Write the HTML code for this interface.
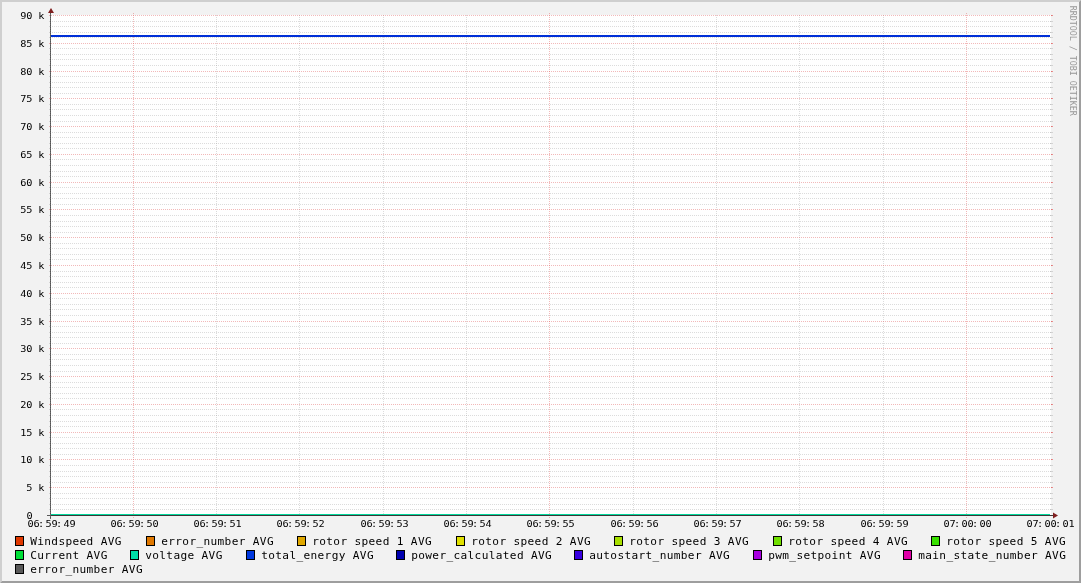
<!DOCTYPE html>
<html><head><meta charset="utf-8"><title>RRDtool graph</title>
<style>html,body{margin:0;padding:0;background:#f2f2f2;overflow:hidden}svg{display:block;will-change:transform}text{font-family:"DejaVu Sans Mono","Liberation Mono",monospace;fill:#000;white-space:pre;stroke:none}.ax{font-size:9.5px;letter-spacing:-0.164px}.ay{font-size:9.5px;letter-spacing:0.5px}.lg{font-size:11.11px;letter-spacing:0.36px}.wm{font-size:7.64px;letter-spacing:-0.05px;fill:#979797}</style></head><body>
<svg width="1081" height="583" viewBox="0 0 1081 583">
<rect x="0" y="0" width="1081" height="583" fill="#f2f2f2"/>
<polygon points="0,0 1081,0 1079,2 2,2 2,581 0,583" fill="#cfcfcf"/>
<polygon points="1081,0 1081,583 0,583 2,581 1079,581 1079,2" fill="#9e9e9e"/>
<rect x="51" y="15" width="1000" height="501" fill="#ffffff"/>
<g shape-rendering="crispEdges">
<line x1="50" y1="509.5" x2="1051" y2="509.5" stroke="rgba(143,143,143,0.31)" stroke-width="1" stroke-dasharray="1 1"/>
<line x1="1050" y1="509.5" x2="1053" y2="509.5" stroke="rgba(143,143,143,0.31)" stroke-width="1"/>
<line x1="49" y1="509.5" x2="50" y2="509.5" stroke="rgba(143,143,143,0.31)" stroke-width="1"/>
<line x1="50" y1="504.5" x2="1051" y2="504.5" stroke="rgba(143,143,143,0.31)" stroke-width="1" stroke-dasharray="1 1"/>
<line x1="1050" y1="504.5" x2="1053" y2="504.5" stroke="rgba(143,143,143,0.31)" stroke-width="1"/>
<line x1="49" y1="504.5" x2="50" y2="504.5" stroke="rgba(143,143,143,0.31)" stroke-width="1"/>
<line x1="50" y1="498.5" x2="1051" y2="498.5" stroke="rgba(143,143,143,0.31)" stroke-width="1" stroke-dasharray="1 1"/>
<line x1="1050" y1="498.5" x2="1053" y2="498.5" stroke="rgba(143,143,143,0.31)" stroke-width="1"/>
<line x1="49" y1="498.5" x2="50" y2="498.5" stroke="rgba(143,143,143,0.31)" stroke-width="1"/>
<line x1="50" y1="493.5" x2="1051" y2="493.5" stroke="rgba(143,143,143,0.31)" stroke-width="1" stroke-dasharray="1 1"/>
<line x1="1050" y1="493.5" x2="1053" y2="493.5" stroke="rgba(143,143,143,0.31)" stroke-width="1"/>
<line x1="49" y1="493.5" x2="50" y2="493.5" stroke="rgba(143,143,143,0.31)" stroke-width="1"/>
<line x1="50" y1="482.5" x2="1051" y2="482.5" stroke="rgba(143,143,143,0.31)" stroke-width="1" stroke-dasharray="1 1"/>
<line x1="1050" y1="482.5" x2="1053" y2="482.5" stroke="rgba(143,143,143,0.31)" stroke-width="1"/>
<line x1="49" y1="482.5" x2="50" y2="482.5" stroke="rgba(143,143,143,0.31)" stroke-width="1"/>
<line x1="50" y1="476.5" x2="1051" y2="476.5" stroke="rgba(143,143,143,0.31)" stroke-width="1" stroke-dasharray="1 1"/>
<line x1="1050" y1="476.5" x2="1053" y2="476.5" stroke="rgba(143,143,143,0.31)" stroke-width="1"/>
<line x1="49" y1="476.5" x2="50" y2="476.5" stroke="rgba(143,143,143,0.31)" stroke-width="1"/>
<line x1="50" y1="471.5" x2="1051" y2="471.5" stroke="rgba(143,143,143,0.31)" stroke-width="1" stroke-dasharray="1 1"/>
<line x1="1050" y1="471.5" x2="1053" y2="471.5" stroke="rgba(143,143,143,0.31)" stroke-width="1"/>
<line x1="49" y1="471.5" x2="50" y2="471.5" stroke="rgba(143,143,143,0.31)" stroke-width="1"/>
<line x1="50" y1="465.5" x2="1051" y2="465.5" stroke="rgba(143,143,143,0.31)" stroke-width="1" stroke-dasharray="1 1"/>
<line x1="1050" y1="465.5" x2="1053" y2="465.5" stroke="rgba(143,143,143,0.31)" stroke-width="1"/>
<line x1="49" y1="465.5" x2="50" y2="465.5" stroke="rgba(143,143,143,0.31)" stroke-width="1"/>
<line x1="50" y1="454.5" x2="1051" y2="454.5" stroke="rgba(143,143,143,0.31)" stroke-width="1" stroke-dasharray="1 1"/>
<line x1="1050" y1="454.5" x2="1053" y2="454.5" stroke="rgba(143,143,143,0.31)" stroke-width="1"/>
<line x1="49" y1="454.5" x2="50" y2="454.5" stroke="rgba(143,143,143,0.31)" stroke-width="1"/>
<line x1="50" y1="448.5" x2="1051" y2="448.5" stroke="rgba(143,143,143,0.31)" stroke-width="1" stroke-dasharray="1 1"/>
<line x1="1050" y1="448.5" x2="1053" y2="448.5" stroke="rgba(143,143,143,0.31)" stroke-width="1"/>
<line x1="49" y1="448.5" x2="50" y2="448.5" stroke="rgba(143,143,143,0.31)" stroke-width="1"/>
<line x1="50" y1="443.5" x2="1051" y2="443.5" stroke="rgba(143,143,143,0.31)" stroke-width="1" stroke-dasharray="1 1"/>
<line x1="1050" y1="443.5" x2="1053" y2="443.5" stroke="rgba(143,143,143,0.31)" stroke-width="1"/>
<line x1="49" y1="443.5" x2="50" y2="443.5" stroke="rgba(143,143,143,0.31)" stroke-width="1"/>
<line x1="50" y1="437.5" x2="1051" y2="437.5" stroke="rgba(143,143,143,0.31)" stroke-width="1" stroke-dasharray="1 1"/>
<line x1="1050" y1="437.5" x2="1053" y2="437.5" stroke="rgba(143,143,143,0.31)" stroke-width="1"/>
<line x1="49" y1="437.5" x2="50" y2="437.5" stroke="rgba(143,143,143,0.31)" stroke-width="1"/>
<line x1="50" y1="426.5" x2="1051" y2="426.5" stroke="rgba(143,143,143,0.31)" stroke-width="1" stroke-dasharray="1 1"/>
<line x1="1050" y1="426.5" x2="1053" y2="426.5" stroke="rgba(143,143,143,0.31)" stroke-width="1"/>
<line x1="49" y1="426.5" x2="50" y2="426.5" stroke="rgba(143,143,143,0.31)" stroke-width="1"/>
<line x1="50" y1="421.5" x2="1051" y2="421.5" stroke="rgba(143,143,143,0.31)" stroke-width="1" stroke-dasharray="1 1"/>
<line x1="1050" y1="421.5" x2="1053" y2="421.5" stroke="rgba(143,143,143,0.31)" stroke-width="1"/>
<line x1="49" y1="421.5" x2="50" y2="421.5" stroke="rgba(143,143,143,0.31)" stroke-width="1"/>
<line x1="50" y1="415.5" x2="1051" y2="415.5" stroke="rgba(143,143,143,0.31)" stroke-width="1" stroke-dasharray="1 1"/>
<line x1="1050" y1="415.5" x2="1053" y2="415.5" stroke="rgba(143,143,143,0.31)" stroke-width="1"/>
<line x1="49" y1="415.5" x2="50" y2="415.5" stroke="rgba(143,143,143,0.31)" stroke-width="1"/>
<line x1="50" y1="409.5" x2="1051" y2="409.5" stroke="rgba(143,143,143,0.31)" stroke-width="1" stroke-dasharray="1 1"/>
<line x1="1050" y1="409.5" x2="1053" y2="409.5" stroke="rgba(143,143,143,0.31)" stroke-width="1"/>
<line x1="49" y1="409.5" x2="50" y2="409.5" stroke="rgba(143,143,143,0.31)" stroke-width="1"/>
<line x1="50" y1="398.5" x2="1051" y2="398.5" stroke="rgba(143,143,143,0.31)" stroke-width="1" stroke-dasharray="1 1"/>
<line x1="1050" y1="398.5" x2="1053" y2="398.5" stroke="rgba(143,143,143,0.31)" stroke-width="1"/>
<line x1="49" y1="398.5" x2="50" y2="398.5" stroke="rgba(143,143,143,0.31)" stroke-width="1"/>
<line x1="50" y1="393.5" x2="1051" y2="393.5" stroke="rgba(143,143,143,0.31)" stroke-width="1" stroke-dasharray="1 1"/>
<line x1="1050" y1="393.5" x2="1053" y2="393.5" stroke="rgba(143,143,143,0.31)" stroke-width="1"/>
<line x1="49" y1="393.5" x2="50" y2="393.5" stroke="rgba(143,143,143,0.31)" stroke-width="1"/>
<line x1="50" y1="387.5" x2="1051" y2="387.5" stroke="rgba(143,143,143,0.31)" stroke-width="1" stroke-dasharray="1 1"/>
<line x1="1050" y1="387.5" x2="1053" y2="387.5" stroke="rgba(143,143,143,0.31)" stroke-width="1"/>
<line x1="49" y1="387.5" x2="50" y2="387.5" stroke="rgba(143,143,143,0.31)" stroke-width="1"/>
<line x1="50" y1="382.5" x2="1051" y2="382.5" stroke="rgba(143,143,143,0.31)" stroke-width="1" stroke-dasharray="1 1"/>
<line x1="1050" y1="382.5" x2="1053" y2="382.5" stroke="rgba(143,143,143,0.31)" stroke-width="1"/>
<line x1="49" y1="382.5" x2="50" y2="382.5" stroke="rgba(143,143,143,0.31)" stroke-width="1"/>
<line x1="50" y1="371.5" x2="1051" y2="371.5" stroke="rgba(143,143,143,0.31)" stroke-width="1" stroke-dasharray="1 1"/>
<line x1="1050" y1="371.5" x2="1053" y2="371.5" stroke="rgba(143,143,143,0.31)" stroke-width="1"/>
<line x1="49" y1="371.5" x2="50" y2="371.5" stroke="rgba(143,143,143,0.31)" stroke-width="1"/>
<line x1="50" y1="365.5" x2="1051" y2="365.5" stroke="rgba(143,143,143,0.31)" stroke-width="1" stroke-dasharray="1 1"/>
<line x1="1050" y1="365.5" x2="1053" y2="365.5" stroke="rgba(143,143,143,0.31)" stroke-width="1"/>
<line x1="49" y1="365.5" x2="50" y2="365.5" stroke="rgba(143,143,143,0.31)" stroke-width="1"/>
<line x1="50" y1="359.5" x2="1051" y2="359.5" stroke="rgba(143,143,143,0.31)" stroke-width="1" stroke-dasharray="1 1"/>
<line x1="1050" y1="359.5" x2="1053" y2="359.5" stroke="rgba(143,143,143,0.31)" stroke-width="1"/>
<line x1="49" y1="359.5" x2="50" y2="359.5" stroke="rgba(143,143,143,0.31)" stroke-width="1"/>
<line x1="50" y1="354.5" x2="1051" y2="354.5" stroke="rgba(143,143,143,0.31)" stroke-width="1" stroke-dasharray="1 1"/>
<line x1="1050" y1="354.5" x2="1053" y2="354.5" stroke="rgba(143,143,143,0.31)" stroke-width="1"/>
<line x1="49" y1="354.5" x2="50" y2="354.5" stroke="rgba(143,143,143,0.31)" stroke-width="1"/>
<line x1="50" y1="343.5" x2="1051" y2="343.5" stroke="rgba(143,143,143,0.31)" stroke-width="1" stroke-dasharray="1 1"/>
<line x1="1050" y1="343.5" x2="1053" y2="343.5" stroke="rgba(143,143,143,0.31)" stroke-width="1"/>
<line x1="49" y1="343.5" x2="50" y2="343.5" stroke="rgba(143,143,143,0.31)" stroke-width="1"/>
<line x1="50" y1="337.5" x2="1051" y2="337.5" stroke="rgba(143,143,143,0.31)" stroke-width="1" stroke-dasharray="1 1"/>
<line x1="1050" y1="337.5" x2="1053" y2="337.5" stroke="rgba(143,143,143,0.31)" stroke-width="1"/>
<line x1="49" y1="337.5" x2="50" y2="337.5" stroke="rgba(143,143,143,0.31)" stroke-width="1"/>
<line x1="50" y1="332.5" x2="1051" y2="332.5" stroke="rgba(143,143,143,0.31)" stroke-width="1" stroke-dasharray="1 1"/>
<line x1="1050" y1="332.5" x2="1053" y2="332.5" stroke="rgba(143,143,143,0.31)" stroke-width="1"/>
<line x1="49" y1="332.5" x2="50" y2="332.5" stroke="rgba(143,143,143,0.31)" stroke-width="1"/>
<line x1="50" y1="326.5" x2="1051" y2="326.5" stroke="rgba(143,143,143,0.31)" stroke-width="1" stroke-dasharray="1 1"/>
<line x1="1050" y1="326.5" x2="1053" y2="326.5" stroke="rgba(143,143,143,0.31)" stroke-width="1"/>
<line x1="49" y1="326.5" x2="50" y2="326.5" stroke="rgba(143,143,143,0.31)" stroke-width="1"/>
<line x1="50" y1="315.5" x2="1051" y2="315.5" stroke="rgba(143,143,143,0.31)" stroke-width="1" stroke-dasharray="1 1"/>
<line x1="1050" y1="315.5" x2="1053" y2="315.5" stroke="rgba(143,143,143,0.31)" stroke-width="1"/>
<line x1="49" y1="315.5" x2="50" y2="315.5" stroke="rgba(143,143,143,0.31)" stroke-width="1"/>
<line x1="50" y1="309.5" x2="1051" y2="309.5" stroke="rgba(143,143,143,0.31)" stroke-width="1" stroke-dasharray="1 1"/>
<line x1="1050" y1="309.5" x2="1053" y2="309.5" stroke="rgba(143,143,143,0.31)" stroke-width="1"/>
<line x1="49" y1="309.5" x2="50" y2="309.5" stroke="rgba(143,143,143,0.31)" stroke-width="1"/>
<line x1="50" y1="304.5" x2="1051" y2="304.5" stroke="rgba(143,143,143,0.31)" stroke-width="1" stroke-dasharray="1 1"/>
<line x1="1050" y1="304.5" x2="1053" y2="304.5" stroke="rgba(143,143,143,0.31)" stroke-width="1"/>
<line x1="49" y1="304.5" x2="50" y2="304.5" stroke="rgba(143,143,143,0.31)" stroke-width="1"/>
<line x1="50" y1="298.5" x2="1051" y2="298.5" stroke="rgba(143,143,143,0.31)" stroke-width="1" stroke-dasharray="1 1"/>
<line x1="1050" y1="298.5" x2="1053" y2="298.5" stroke="rgba(143,143,143,0.31)" stroke-width="1"/>
<line x1="49" y1="298.5" x2="50" y2="298.5" stroke="rgba(143,143,143,0.31)" stroke-width="1"/>
<line x1="50" y1="287.5" x2="1051" y2="287.5" stroke="rgba(143,143,143,0.31)" stroke-width="1" stroke-dasharray="1 1"/>
<line x1="1050" y1="287.5" x2="1053" y2="287.5" stroke="rgba(143,143,143,0.31)" stroke-width="1"/>
<line x1="49" y1="287.5" x2="50" y2="287.5" stroke="rgba(143,143,143,0.31)" stroke-width="1"/>
<line x1="50" y1="282.5" x2="1051" y2="282.5" stroke="rgba(143,143,143,0.31)" stroke-width="1" stroke-dasharray="1 1"/>
<line x1="1050" y1="282.5" x2="1053" y2="282.5" stroke="rgba(143,143,143,0.31)" stroke-width="1"/>
<line x1="49" y1="282.5" x2="50" y2="282.5" stroke="rgba(143,143,143,0.31)" stroke-width="1"/>
<line x1="50" y1="276.5" x2="1051" y2="276.5" stroke="rgba(143,143,143,0.31)" stroke-width="1" stroke-dasharray="1 1"/>
<line x1="1050" y1="276.5" x2="1053" y2="276.5" stroke="rgba(143,143,143,0.31)" stroke-width="1"/>
<line x1="49" y1="276.5" x2="50" y2="276.5" stroke="rgba(143,143,143,0.31)" stroke-width="1"/>
<line x1="50" y1="271.5" x2="1051" y2="271.5" stroke="rgba(143,143,143,0.31)" stroke-width="1" stroke-dasharray="1 1"/>
<line x1="1050" y1="271.5" x2="1053" y2="271.5" stroke="rgba(143,143,143,0.31)" stroke-width="1"/>
<line x1="49" y1="271.5" x2="50" y2="271.5" stroke="rgba(143,143,143,0.31)" stroke-width="1"/>
<line x1="50" y1="259.5" x2="1051" y2="259.5" stroke="rgba(143,143,143,0.31)" stroke-width="1" stroke-dasharray="1 1"/>
<line x1="1050" y1="259.5" x2="1053" y2="259.5" stroke="rgba(143,143,143,0.31)" stroke-width="1"/>
<line x1="49" y1="259.5" x2="50" y2="259.5" stroke="rgba(143,143,143,0.31)" stroke-width="1"/>
<line x1="50" y1="254.5" x2="1051" y2="254.5" stroke="rgba(143,143,143,0.31)" stroke-width="1" stroke-dasharray="1 1"/>
<line x1="1050" y1="254.5" x2="1053" y2="254.5" stroke="rgba(143,143,143,0.31)" stroke-width="1"/>
<line x1="49" y1="254.5" x2="50" y2="254.5" stroke="rgba(143,143,143,0.31)" stroke-width="1"/>
<line x1="50" y1="248.5" x2="1051" y2="248.5" stroke="rgba(143,143,143,0.31)" stroke-width="1" stroke-dasharray="1 1"/>
<line x1="1050" y1="248.5" x2="1053" y2="248.5" stroke="rgba(143,143,143,0.31)" stroke-width="1"/>
<line x1="49" y1="248.5" x2="50" y2="248.5" stroke="rgba(143,143,143,0.31)" stroke-width="1"/>
<line x1="50" y1="243.5" x2="1051" y2="243.5" stroke="rgba(143,143,143,0.31)" stroke-width="1" stroke-dasharray="1 1"/>
<line x1="1050" y1="243.5" x2="1053" y2="243.5" stroke="rgba(143,143,143,0.31)" stroke-width="1"/>
<line x1="49" y1="243.5" x2="50" y2="243.5" stroke="rgba(143,143,143,0.31)" stroke-width="1"/>
<line x1="50" y1="232.5" x2="1051" y2="232.5" stroke="rgba(143,143,143,0.31)" stroke-width="1" stroke-dasharray="1 1"/>
<line x1="1050" y1="232.5" x2="1053" y2="232.5" stroke="rgba(143,143,143,0.31)" stroke-width="1"/>
<line x1="49" y1="232.5" x2="50" y2="232.5" stroke="rgba(143,143,143,0.31)" stroke-width="1"/>
<line x1="50" y1="226.5" x2="1051" y2="226.5" stroke="rgba(143,143,143,0.31)" stroke-width="1" stroke-dasharray="1 1"/>
<line x1="1050" y1="226.5" x2="1053" y2="226.5" stroke="rgba(143,143,143,0.31)" stroke-width="1"/>
<line x1="49" y1="226.5" x2="50" y2="226.5" stroke="rgba(143,143,143,0.31)" stroke-width="1"/>
<line x1="50" y1="221.5" x2="1051" y2="221.5" stroke="rgba(143,143,143,0.31)" stroke-width="1" stroke-dasharray="1 1"/>
<line x1="1050" y1="221.5" x2="1053" y2="221.5" stroke="rgba(143,143,143,0.31)" stroke-width="1"/>
<line x1="49" y1="221.5" x2="50" y2="221.5" stroke="rgba(143,143,143,0.31)" stroke-width="1"/>
<line x1="50" y1="215.5" x2="1051" y2="215.5" stroke="rgba(143,143,143,0.31)" stroke-width="1" stroke-dasharray="1 1"/>
<line x1="1050" y1="215.5" x2="1053" y2="215.5" stroke="rgba(143,143,143,0.31)" stroke-width="1"/>
<line x1="49" y1="215.5" x2="50" y2="215.5" stroke="rgba(143,143,143,0.31)" stroke-width="1"/>
<line x1="50" y1="204.5" x2="1051" y2="204.5" stroke="rgba(143,143,143,0.31)" stroke-width="1" stroke-dasharray="1 1"/>
<line x1="1050" y1="204.5" x2="1053" y2="204.5" stroke="rgba(143,143,143,0.31)" stroke-width="1"/>
<line x1="49" y1="204.5" x2="50" y2="204.5" stroke="rgba(143,143,143,0.31)" stroke-width="1"/>
<line x1="50" y1="198.5" x2="1051" y2="198.5" stroke="rgba(143,143,143,0.31)" stroke-width="1" stroke-dasharray="1 1"/>
<line x1="1050" y1="198.5" x2="1053" y2="198.5" stroke="rgba(143,143,143,0.31)" stroke-width="1"/>
<line x1="49" y1="198.5" x2="50" y2="198.5" stroke="rgba(143,143,143,0.31)" stroke-width="1"/>
<line x1="50" y1="193.5" x2="1051" y2="193.5" stroke="rgba(143,143,143,0.31)" stroke-width="1" stroke-dasharray="1 1"/>
<line x1="1050" y1="193.5" x2="1053" y2="193.5" stroke="rgba(143,143,143,0.31)" stroke-width="1"/>
<line x1="49" y1="193.5" x2="50" y2="193.5" stroke="rgba(143,143,143,0.31)" stroke-width="1"/>
<line x1="50" y1="187.5" x2="1051" y2="187.5" stroke="rgba(143,143,143,0.31)" stroke-width="1" stroke-dasharray="1 1"/>
<line x1="1050" y1="187.5" x2="1053" y2="187.5" stroke="rgba(143,143,143,0.31)" stroke-width="1"/>
<line x1="49" y1="187.5" x2="50" y2="187.5" stroke="rgba(143,143,143,0.31)" stroke-width="1"/>
<line x1="50" y1="176.5" x2="1051" y2="176.5" stroke="rgba(143,143,143,0.31)" stroke-width="1" stroke-dasharray="1 1"/>
<line x1="1050" y1="176.5" x2="1053" y2="176.5" stroke="rgba(143,143,143,0.31)" stroke-width="1"/>
<line x1="49" y1="176.5" x2="50" y2="176.5" stroke="rgba(143,143,143,0.31)" stroke-width="1"/>
<line x1="50" y1="171.5" x2="1051" y2="171.5" stroke="rgba(143,143,143,0.31)" stroke-width="1" stroke-dasharray="1 1"/>
<line x1="1050" y1="171.5" x2="1053" y2="171.5" stroke="rgba(143,143,143,0.31)" stroke-width="1"/>
<line x1="49" y1="171.5" x2="50" y2="171.5" stroke="rgba(143,143,143,0.31)" stroke-width="1"/>
<line x1="50" y1="165.5" x2="1051" y2="165.5" stroke="rgba(143,143,143,0.31)" stroke-width="1" stroke-dasharray="1 1"/>
<line x1="1050" y1="165.5" x2="1053" y2="165.5" stroke="rgba(143,143,143,0.31)" stroke-width="1"/>
<line x1="49" y1="165.5" x2="50" y2="165.5" stroke="rgba(143,143,143,0.31)" stroke-width="1"/>
<line x1="50" y1="159.5" x2="1051" y2="159.5" stroke="rgba(143,143,143,0.31)" stroke-width="1" stroke-dasharray="1 1"/>
<line x1="1050" y1="159.5" x2="1053" y2="159.5" stroke="rgba(143,143,143,0.31)" stroke-width="1"/>
<line x1="49" y1="159.5" x2="50" y2="159.5" stroke="rgba(143,143,143,0.31)" stroke-width="1"/>
<line x1="50" y1="148.5" x2="1051" y2="148.5" stroke="rgba(143,143,143,0.31)" stroke-width="1" stroke-dasharray="1 1"/>
<line x1="1050" y1="148.5" x2="1053" y2="148.5" stroke="rgba(143,143,143,0.31)" stroke-width="1"/>
<line x1="49" y1="148.5" x2="50" y2="148.5" stroke="rgba(143,143,143,0.31)" stroke-width="1"/>
<line x1="50" y1="143.5" x2="1051" y2="143.5" stroke="rgba(143,143,143,0.31)" stroke-width="1" stroke-dasharray="1 1"/>
<line x1="1050" y1="143.5" x2="1053" y2="143.5" stroke="rgba(143,143,143,0.31)" stroke-width="1"/>
<line x1="49" y1="143.5" x2="50" y2="143.5" stroke="rgba(143,143,143,0.31)" stroke-width="1"/>
<line x1="50" y1="137.5" x2="1051" y2="137.5" stroke="rgba(143,143,143,0.31)" stroke-width="1" stroke-dasharray="1 1"/>
<line x1="1050" y1="137.5" x2="1053" y2="137.5" stroke="rgba(143,143,143,0.31)" stroke-width="1"/>
<line x1="49" y1="137.5" x2="50" y2="137.5" stroke="rgba(143,143,143,0.31)" stroke-width="1"/>
<line x1="50" y1="132.5" x2="1051" y2="132.5" stroke="rgba(143,143,143,0.31)" stroke-width="1" stroke-dasharray="1 1"/>
<line x1="1050" y1="132.5" x2="1053" y2="132.5" stroke="rgba(143,143,143,0.31)" stroke-width="1"/>
<line x1="49" y1="132.5" x2="50" y2="132.5" stroke="rgba(143,143,143,0.31)" stroke-width="1"/>
<line x1="50" y1="121.5" x2="1051" y2="121.5" stroke="rgba(143,143,143,0.31)" stroke-width="1" stroke-dasharray="1 1"/>
<line x1="1050" y1="121.5" x2="1053" y2="121.5" stroke="rgba(143,143,143,0.31)" stroke-width="1"/>
<line x1="49" y1="121.5" x2="50" y2="121.5" stroke="rgba(143,143,143,0.31)" stroke-width="1"/>
<line x1="50" y1="115.5" x2="1051" y2="115.5" stroke="rgba(143,143,143,0.31)" stroke-width="1" stroke-dasharray="1 1"/>
<line x1="1050" y1="115.5" x2="1053" y2="115.5" stroke="rgba(143,143,143,0.31)" stroke-width="1"/>
<line x1="49" y1="115.5" x2="50" y2="115.5" stroke="rgba(143,143,143,0.31)" stroke-width="1"/>
<line x1="50" y1="109.5" x2="1051" y2="109.5" stroke="rgba(143,143,143,0.31)" stroke-width="1" stroke-dasharray="1 1"/>
<line x1="1050" y1="109.5" x2="1053" y2="109.5" stroke="rgba(143,143,143,0.31)" stroke-width="1"/>
<line x1="49" y1="109.5" x2="50" y2="109.5" stroke="rgba(143,143,143,0.31)" stroke-width="1"/>
<line x1="50" y1="104.5" x2="1051" y2="104.5" stroke="rgba(143,143,143,0.31)" stroke-width="1" stroke-dasharray="1 1"/>
<line x1="1050" y1="104.5" x2="1053" y2="104.5" stroke="rgba(143,143,143,0.31)" stroke-width="1"/>
<line x1="49" y1="104.5" x2="50" y2="104.5" stroke="rgba(143,143,143,0.31)" stroke-width="1"/>
<line x1="50" y1="93.5" x2="1051" y2="93.5" stroke="rgba(143,143,143,0.31)" stroke-width="1" stroke-dasharray="1 1"/>
<line x1="1050" y1="93.5" x2="1053" y2="93.5" stroke="rgba(143,143,143,0.31)" stroke-width="1"/>
<line x1="49" y1="93.5" x2="50" y2="93.5" stroke="rgba(143,143,143,0.31)" stroke-width="1"/>
<line x1="50" y1="87.5" x2="1051" y2="87.5" stroke="rgba(143,143,143,0.31)" stroke-width="1" stroke-dasharray="1 1"/>
<line x1="1050" y1="87.5" x2="1053" y2="87.5" stroke="rgba(143,143,143,0.31)" stroke-width="1"/>
<line x1="49" y1="87.5" x2="50" y2="87.5" stroke="rgba(143,143,143,0.31)" stroke-width="1"/>
<line x1="50" y1="82.5" x2="1051" y2="82.5" stroke="rgba(143,143,143,0.31)" stroke-width="1" stroke-dasharray="1 1"/>
<line x1="1050" y1="82.5" x2="1053" y2="82.5" stroke="rgba(143,143,143,0.31)" stroke-width="1"/>
<line x1="49" y1="82.5" x2="50" y2="82.5" stroke="rgba(143,143,143,0.31)" stroke-width="1"/>
<line x1="50" y1="76.5" x2="1051" y2="76.5" stroke="rgba(143,143,143,0.31)" stroke-width="1" stroke-dasharray="1 1"/>
<line x1="1050" y1="76.5" x2="1053" y2="76.5" stroke="rgba(143,143,143,0.31)" stroke-width="1"/>
<line x1="49" y1="76.5" x2="50" y2="76.5" stroke="rgba(143,143,143,0.31)" stroke-width="1"/>
<line x1="50" y1="65.5" x2="1051" y2="65.5" stroke="rgba(143,143,143,0.31)" stroke-width="1" stroke-dasharray="1 1"/>
<line x1="1050" y1="65.5" x2="1053" y2="65.5" stroke="rgba(143,143,143,0.31)" stroke-width="1"/>
<line x1="49" y1="65.5" x2="50" y2="65.5" stroke="rgba(143,143,143,0.31)" stroke-width="1"/>
<line x1="50" y1="59.5" x2="1051" y2="59.5" stroke="rgba(143,143,143,0.31)" stroke-width="1" stroke-dasharray="1 1"/>
<line x1="1050" y1="59.5" x2="1053" y2="59.5" stroke="rgba(143,143,143,0.31)" stroke-width="1"/>
<line x1="49" y1="59.5" x2="50" y2="59.5" stroke="rgba(143,143,143,0.31)" stroke-width="1"/>
<line x1="50" y1="54.5" x2="1051" y2="54.5" stroke="rgba(143,143,143,0.31)" stroke-width="1" stroke-dasharray="1 1"/>
<line x1="1050" y1="54.5" x2="1053" y2="54.5" stroke="rgba(143,143,143,0.31)" stroke-width="1"/>
<line x1="49" y1="54.5" x2="50" y2="54.5" stroke="rgba(143,143,143,0.31)" stroke-width="1"/>
<line x1="50" y1="48.5" x2="1051" y2="48.5" stroke="rgba(143,143,143,0.31)" stroke-width="1" stroke-dasharray="1 1"/>
<line x1="1050" y1="48.5" x2="1053" y2="48.5" stroke="rgba(143,143,143,0.31)" stroke-width="1"/>
<line x1="49" y1="48.5" x2="50" y2="48.5" stroke="rgba(143,143,143,0.31)" stroke-width="1"/>
<line x1="50" y1="37.5" x2="1051" y2="37.5" stroke="rgba(143,143,143,0.31)" stroke-width="1" stroke-dasharray="1 1"/>
<line x1="1050" y1="37.5" x2="1053" y2="37.5" stroke="rgba(143,143,143,0.31)" stroke-width="1"/>
<line x1="49" y1="37.5" x2="50" y2="37.5" stroke="rgba(143,143,143,0.31)" stroke-width="1"/>
<line x1="50" y1="32.5" x2="1051" y2="32.5" stroke="rgba(143,143,143,0.31)" stroke-width="1" stroke-dasharray="1 1"/>
<line x1="1050" y1="32.5" x2="1053" y2="32.5" stroke="rgba(143,143,143,0.31)" stroke-width="1"/>
<line x1="49" y1="32.5" x2="50" y2="32.5" stroke="rgba(143,143,143,0.31)" stroke-width="1"/>
<line x1="50" y1="26.5" x2="1051" y2="26.5" stroke="rgba(143,143,143,0.31)" stroke-width="1" stroke-dasharray="1 1"/>
<line x1="1050" y1="26.5" x2="1053" y2="26.5" stroke="rgba(143,143,143,0.31)" stroke-width="1"/>
<line x1="49" y1="26.5" x2="50" y2="26.5" stroke="rgba(143,143,143,0.31)" stroke-width="1"/>
<line x1="50" y1="21.5" x2="1051" y2="21.5" stroke="rgba(143,143,143,0.31)" stroke-width="1" stroke-dasharray="1 1"/>
<line x1="1050" y1="21.5" x2="1053" y2="21.5" stroke="rgba(143,143,143,0.31)" stroke-width="1"/>
<line x1="49" y1="21.5" x2="50" y2="21.5" stroke="rgba(143,143,143,0.31)" stroke-width="1"/>
<line x1="216.5" y1="15" x2="216.5" y2="516" stroke="rgba(143,143,143,0.31)" stroke-width="1" stroke-dasharray="1 1"/>
<line x1="299.5" y1="15" x2="299.5" y2="516" stroke="rgba(143,143,143,0.31)" stroke-width="1" stroke-dasharray="1 1"/>
<line x1="383.5" y1="15" x2="383.5" y2="516" stroke="rgba(143,143,143,0.31)" stroke-width="1" stroke-dasharray="1 1"/>
<line x1="466.5" y1="15" x2="466.5" y2="516" stroke="rgba(143,143,143,0.31)" stroke-width="1" stroke-dasharray="1 1"/>
<line x1="633.5" y1="15" x2="633.5" y2="516" stroke="rgba(143,143,143,0.31)" stroke-width="1" stroke-dasharray="1 1"/>
<line x1="716.5" y1="15" x2="716.5" y2="516" stroke="rgba(143,143,143,0.31)" stroke-width="1" stroke-dasharray="1 1"/>
<line x1="799.5" y1="15" x2="799.5" y2="516" stroke="rgba(143,143,143,0.31)" stroke-width="1" stroke-dasharray="1 1"/>
<line x1="883.5" y1="15" x2="883.5" y2="516" stroke="rgba(143,143,143,0.31)" stroke-width="1" stroke-dasharray="1 1"/>
<line x1="49" y1="515.5" x2="1052" y2="515.5" stroke="rgba(222,79,79,0.4)" stroke-width="1" stroke-dasharray="1 1"/>
<line x1="1051" y1="515.5" x2="1053" y2="515.5" stroke="rgba(222,79,79,0.6)" stroke-width="1"/>
<line x1="49" y1="487.5" x2="1052" y2="487.5" stroke="rgba(222,79,79,0.4)" stroke-width="1" stroke-dasharray="1 1"/>
<line x1="1051" y1="487.5" x2="1053" y2="487.5" stroke="rgba(222,79,79,0.6)" stroke-width="1"/>
<line x1="49" y1="459.5" x2="1052" y2="459.5" stroke="rgba(222,79,79,0.4)" stroke-width="1" stroke-dasharray="1 1"/>
<line x1="1051" y1="459.5" x2="1053" y2="459.5" stroke="rgba(222,79,79,0.6)" stroke-width="1"/>
<line x1="49" y1="432.5" x2="1052" y2="432.5" stroke="rgba(222,79,79,0.4)" stroke-width="1" stroke-dasharray="1 1"/>
<line x1="1051" y1="432.5" x2="1053" y2="432.5" stroke="rgba(222,79,79,0.6)" stroke-width="1"/>
<line x1="49" y1="404.5" x2="1052" y2="404.5" stroke="rgba(222,79,79,0.4)" stroke-width="1" stroke-dasharray="1 1"/>
<line x1="1051" y1="404.5" x2="1053" y2="404.5" stroke="rgba(222,79,79,0.6)" stroke-width="1"/>
<line x1="49" y1="376.5" x2="1052" y2="376.5" stroke="rgba(222,79,79,0.4)" stroke-width="1" stroke-dasharray="1 1"/>
<line x1="1051" y1="376.5" x2="1053" y2="376.5" stroke="rgba(222,79,79,0.6)" stroke-width="1"/>
<line x1="49" y1="348.5" x2="1052" y2="348.5" stroke="rgba(222,79,79,0.4)" stroke-width="1" stroke-dasharray="1 1"/>
<line x1="1051" y1="348.5" x2="1053" y2="348.5" stroke="rgba(222,79,79,0.6)" stroke-width="1"/>
<line x1="49" y1="321.5" x2="1052" y2="321.5" stroke="rgba(222,79,79,0.4)" stroke-width="1" stroke-dasharray="1 1"/>
<line x1="1051" y1="321.5" x2="1053" y2="321.5" stroke="rgba(222,79,79,0.6)" stroke-width="1"/>
<line x1="49" y1="293.5" x2="1052" y2="293.5" stroke="rgba(222,79,79,0.4)" stroke-width="1" stroke-dasharray="1 1"/>
<line x1="1051" y1="293.5" x2="1053" y2="293.5" stroke="rgba(222,79,79,0.6)" stroke-width="1"/>
<line x1="49" y1="265.5" x2="1052" y2="265.5" stroke="rgba(222,79,79,0.4)" stroke-width="1" stroke-dasharray="1 1"/>
<line x1="1051" y1="265.5" x2="1053" y2="265.5" stroke="rgba(222,79,79,0.6)" stroke-width="1"/>
<line x1="49" y1="237.5" x2="1052" y2="237.5" stroke="rgba(222,79,79,0.4)" stroke-width="1" stroke-dasharray="1 1"/>
<line x1="1051" y1="237.5" x2="1053" y2="237.5" stroke="rgba(222,79,79,0.6)" stroke-width="1"/>
<line x1="49" y1="209.5" x2="1052" y2="209.5" stroke="rgba(222,79,79,0.4)" stroke-width="1" stroke-dasharray="1 1"/>
<line x1="1051" y1="209.5" x2="1053" y2="209.5" stroke="rgba(222,79,79,0.6)" stroke-width="1"/>
<line x1="49" y1="182.5" x2="1052" y2="182.5" stroke="rgba(222,79,79,0.4)" stroke-width="1" stroke-dasharray="1 1"/>
<line x1="1051" y1="182.5" x2="1053" y2="182.5" stroke="rgba(222,79,79,0.6)" stroke-width="1"/>
<line x1="49" y1="154.5" x2="1052" y2="154.5" stroke="rgba(222,79,79,0.4)" stroke-width="1" stroke-dasharray="1 1"/>
<line x1="1051" y1="154.5" x2="1053" y2="154.5" stroke="rgba(222,79,79,0.6)" stroke-width="1"/>
<line x1="49" y1="126.5" x2="1052" y2="126.5" stroke="rgba(222,79,79,0.4)" stroke-width="1" stroke-dasharray="1 1"/>
<line x1="1051" y1="126.5" x2="1053" y2="126.5" stroke="rgba(222,79,79,0.6)" stroke-width="1"/>
<line x1="49" y1="98.5" x2="1052" y2="98.5" stroke="rgba(222,79,79,0.4)" stroke-width="1" stroke-dasharray="1 1"/>
<line x1="1051" y1="98.5" x2="1053" y2="98.5" stroke="rgba(222,79,79,0.6)" stroke-width="1"/>
<line x1="49" y1="71.5" x2="1052" y2="71.5" stroke="rgba(222,79,79,0.4)" stroke-width="1" stroke-dasharray="1 1"/>
<line x1="1051" y1="71.5" x2="1053" y2="71.5" stroke="rgba(222,79,79,0.6)" stroke-width="1"/>
<line x1="49" y1="43.5" x2="1052" y2="43.5" stroke="rgba(222,79,79,0.4)" stroke-width="1" stroke-dasharray="1 1"/>
<line x1="1051" y1="43.5" x2="1053" y2="43.5" stroke="rgba(222,79,79,0.6)" stroke-width="1"/>
<line x1="49" y1="15.5" x2="1052" y2="15.5" stroke="rgba(222,79,79,0.4)" stroke-width="1" stroke-dasharray="1 1"/>
<line x1="1051" y1="15.5" x2="1053" y2="15.5" stroke="rgba(222,79,79,0.6)" stroke-width="1"/>
<line x1="133.5" y1="13" x2="133.5" y2="518" stroke="rgba(222,79,79,0.4)" stroke-width="1" stroke-dasharray="1 1"/>
<line x1="549.5" y1="13" x2="549.5" y2="518" stroke="rgba(222,79,79,0.4)" stroke-width="1" stroke-dasharray="1 1"/>
<line x1="966.5" y1="13" x2="966.5" y2="518" stroke="rgba(222,79,79,0.4)" stroke-width="1" stroke-dasharray="1 1"/>
<rect x="51" y="35" width="999" height="2" fill="#0030d8"/>
<rect x="51" y="514" width="999" height="1.4" fill="#00d89c"/>
<rect x="50" y="11" width="1" height="508" fill="#6a6a6a"/>
<line x1="50.5" y1="11" x2="50.5" y2="519" stroke="#545454" stroke-width="1" stroke-dasharray="1 1"/>
<rect x="47" y="515" width="1008" height="1" fill="#3c3636"/>
<rect x="47" y="515" width="4" height="1" fill="#585858"/>
</g>
<polygon points="48,13 54,13 51,8" fill="#801f1f"/>
<polygon points="1053,512.5 1053,518.5 1058,515.5" fill="#801f1f"/>
<text class="ax" transform="translate(26.5,519) scale(1.08,1)">0</text>
<text class="ax" transform="translate(20.2,491) scale(1.08,1)"> 5 k</text>
<text class="ax" transform="translate(20.2,463) scale(1.08,1)">10 k</text>
<text class="ax" transform="translate(20.2,436) scale(1.08,1)">15 k</text>
<text class="ax" transform="translate(20.2,408) scale(1.08,1)">20 k</text>
<text class="ax" transform="translate(20.2,380) scale(1.08,1)">25 k</text>
<text class="ax" transform="translate(20.2,352) scale(1.08,1)">30 k</text>
<text class="ax" transform="translate(20.2,325) scale(1.08,1)">35 k</text>
<text class="ax" transform="translate(20.2,297) scale(1.08,1)">40 k</text>
<text class="ax" transform="translate(20.2,269) scale(1.08,1)">45 k</text>
<text class="ax" transform="translate(20.2,241) scale(1.08,1)">50 k</text>
<text class="ax" transform="translate(20.2,213) scale(1.08,1)">55 k</text>
<text class="ax" transform="translate(20.2,186) scale(1.08,1)">60 k</text>
<text class="ax" transform="translate(20.2,158) scale(1.08,1)">65 k</text>
<text class="ax" transform="translate(20.2,130) scale(1.08,1)">70 k</text>
<text class="ax" transform="translate(20.2,102) scale(1.08,1)">75 k</text>
<text class="ax" transform="translate(20.2,75) scale(1.08,1)">80 k</text>
<text class="ax" transform="translate(20.2,47) scale(1.08,1)">85 k</text>
<text class="ax" transform="translate(20.2,19) scale(1.08,1)">90 k</text>
<text class="ax" transform="translate(27.50,527) scale(1.08,1)">06<tspan dx="-1.4">:</tspan><tspan dx="1.4">59</tspan><tspan dx="-1.4">:</tspan><tspan dx="1.4">49</tspan></text>
<text class="ax" transform="translate(110.50,527) scale(1.08,1)">06<tspan dx="-1.4">:</tspan><tspan dx="1.4">59</tspan><tspan dx="-1.4">:</tspan><tspan dx="1.4">50</tspan></text>
<text class="ax" transform="translate(193.50,527) scale(1.08,1)">06<tspan dx="-1.4">:</tspan><tspan dx="1.4">59</tspan><tspan dx="-1.4">:</tspan><tspan dx="1.4">51</tspan></text>
<text class="ax" transform="translate(276.50,527) scale(1.08,1)">06<tspan dx="-1.4">:</tspan><tspan dx="1.4">59</tspan><tspan dx="-1.4">:</tspan><tspan dx="1.4">52</tspan></text>
<text class="ax" transform="translate(360.50,527) scale(1.08,1)">06<tspan dx="-1.4">:</tspan><tspan dx="1.4">59</tspan><tspan dx="-1.4">:</tspan><tspan dx="1.4">53</tspan></text>
<text class="ax" transform="translate(443.50,527) scale(1.08,1)">06<tspan dx="-1.4">:</tspan><tspan dx="1.4">59</tspan><tspan dx="-1.4">:</tspan><tspan dx="1.4">54</tspan></text>
<text class="ax" transform="translate(526.50,527) scale(1.08,1)">06<tspan dx="-1.4">:</tspan><tspan dx="1.4">59</tspan><tspan dx="-1.4">:</tspan><tspan dx="1.4">55</tspan></text>
<text class="ax" transform="translate(610.50,527) scale(1.08,1)">06<tspan dx="-1.4">:</tspan><tspan dx="1.4">59</tspan><tspan dx="-1.4">:</tspan><tspan dx="1.4">56</tspan></text>
<text class="ax" transform="translate(693.50,527) scale(1.08,1)">06<tspan dx="-1.4">:</tspan><tspan dx="1.4">59</tspan><tspan dx="-1.4">:</tspan><tspan dx="1.4">57</tspan></text>
<text class="ax" transform="translate(776.50,527) scale(1.08,1)">06<tspan dx="-1.4">:</tspan><tspan dx="1.4">59</tspan><tspan dx="-1.4">:</tspan><tspan dx="1.4">58</tspan></text>
<text class="ax" transform="translate(860.50,527) scale(1.08,1)">06<tspan dx="-1.4">:</tspan><tspan dx="1.4">59</tspan><tspan dx="-1.4">:</tspan><tspan dx="1.4">59</tspan></text>
<text class="ax" transform="translate(943.50,527) scale(1.08,1)">07<tspan dx="-1.4">:</tspan><tspan dx="1.4">00</tspan><tspan dx="-1.4">:</tspan><tspan dx="1.4">00</tspan></text>
<text class="ax" transform="translate(1026.50,527) scale(1.08,1)">07<tspan dx="-1.4">:</tspan><tspan dx="1.4">00</tspan><tspan dx="-1.4">:</tspan><tspan dx="1.4">01</tspan></text>
<rect x="15.5" y="536.5" width="8" height="9" fill="#e03800" stroke="#000" stroke-width="1"/>
<text class="lg" x="30.2" y="545">Windspeed AVG</text>
<rect x="146.5" y="536.5" width="8" height="9" fill="#e07800" stroke="#000" stroke-width="1"/>
<text class="lg" x="161.2" y="545">error_number AVG</text>
<rect x="297.5" y="536.5" width="8" height="9" fill="#e0a800" stroke="#000" stroke-width="1"/>
<text class="lg" x="312.2" y="545">rotor speed 1 AVG</text>
<rect x="456.5" y="536.5" width="8" height="9" fill="#e0e000" stroke="#000" stroke-width="1"/>
<text class="lg" x="471.2" y="545">rotor speed 2 AVG</text>
<rect x="614.5" y="536.5" width="8" height="9" fill="#a8e000" stroke="#000" stroke-width="1"/>
<text class="lg" x="629.2" y="545">rotor speed 3 AVG</text>
<rect x="773.5" y="536.5" width="8" height="9" fill="#70e000" stroke="#000" stroke-width="1"/>
<text class="lg" x="788.2" y="545">rotor speed 4 AVG</text>
<rect x="931.5" y="536.5" width="8" height="9" fill="#38e000" stroke="#000" stroke-width="1"/>
<text class="lg" x="946.2" y="545">rotor speed 5 AVG</text>
<rect x="15.5" y="550.5" width="8" height="9" fill="#00e038" stroke="#000" stroke-width="1"/>
<text class="lg" x="30.2" y="559">Current AVG</text>
<rect x="130.5" y="550.5" width="8" height="9" fill="#00e0a8" stroke="#000" stroke-width="1"/>
<text class="lg" x="145.2" y="559">voltage AVG</text>
<rect x="246.5" y="550.5" width="8" height="9" fill="#0038e0" stroke="#000" stroke-width="1"/>
<text class="lg" x="261.2" y="559">total_energy AVG</text>
<rect x="396.5" y="550.5" width="8" height="9" fill="#0000b0" stroke="#000" stroke-width="1"/>
<text class="lg" x="411.2" y="559">power_calculated AVG</text>
<rect x="574.5" y="550.5" width="8" height="9" fill="#3800e0" stroke="#000" stroke-width="1"/>
<text class="lg" x="589.2" y="559">autostart_number AVG</text>
<rect x="753.5" y="550.5" width="8" height="9" fill="#a800e0" stroke="#000" stroke-width="1"/>
<text class="lg" x="768.2" y="559">pwm_setpoint AVG</text>
<rect x="903.5" y="550.5" width="8" height="9" fill="#e000a8" stroke="#000" stroke-width="1"/>
<text class="lg" x="918.2" y="559">main_state_number AVG</text>
<rect x="15.5" y="564.5" width="8" height="9" fill="#585858" stroke="#000" stroke-width="1"/>
<text class="lg" x="30.2" y="573">error_number AVG</text>
<text class="wm" transform="translate(1070,5.8) rotate(90) scale(1.1,1.05)" x="0" y="0">RRDTOOL / TOBI OETIKER</text>
</svg></body></html>
